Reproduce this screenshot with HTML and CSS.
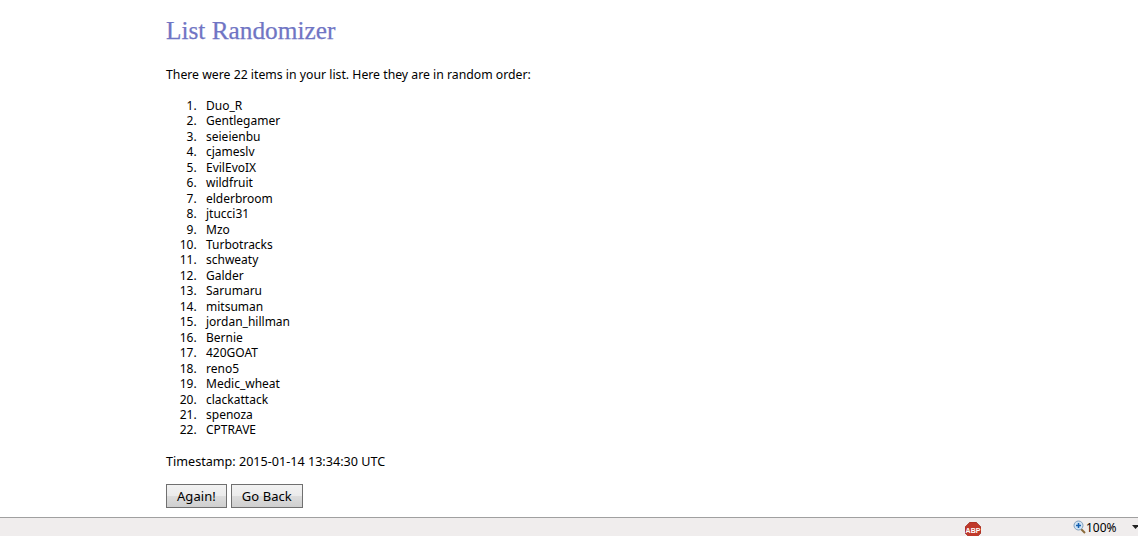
FILE: index.html
```html
<!DOCTYPE html>
<html lang="en">
<head>
<meta charset="utf-8">
<title>List Randomizer</title>
<link rel="stylesheet" href="styles.css">
</head>
<body>
<main class="page">
<h1 class="title">List Randomizer</h1>
<p class="intro">There were 22 items in your list. Here they are in random order:</p>
<ol class="items">
<li>Duo_R</li><li>Gentlegamer</li><li>seieienbu</li><li>cjameslv</li><li>EvilEvoIX</li><li>wildfruit</li><li>elderbroom</li><li>jtucci31</li><li>Mzo</li><li>Turbotracks</li><li>schweaty</li><li>Galder</li><li>Sarumaru</li><li>mitsuman</li><li>jordan_hillman</li><li>Bernie</li><li>420GOAT</li><li>reno5</li><li>Medic_wheat</li><li>clackattack</li><li>spenoza</li><li>CPTRAVE</li>
</ol>
<p class="stamp">Timestamp: 2015-01-14 13:34:30 UTC</p>
<div class="actions"><button class="btn">Again!</button><button class="btn">Go Back</button></div>
</main>
<footer class="status">
<svg class="abp" width="16" height="16" viewBox="0 0 16 16"><polygon points="5,0 11,0 16,5 16,11 11,16 5,16 0,11 0,5" fill="#c0392b" stroke="#8e2318" stroke-width="0.600"/><text x="8" y="10.500" text-anchor="middle" class="abp-text">ABP</text></svg>
<svg class="zoom-icon" width="13" height="14" viewBox="0 0 13 14"><line x1="8" y1="9" x2="12" y2="13" stroke="#8a6a3a" stroke-width="2"/><circle cx="5.500" cy="5.500" r="4.500" fill="#cfe3f5" stroke="#7f9db9"/><path d="M3 5.500h5M5.500 3v5" stroke="#1560b0" stroke-width="1.500"/></svg>
<span class="zoom-text">100%</span>
<svg class="caret" width="7" height="4" viewBox="0 0 7 4"><polygon points="0,0 7,0 3.500,4" fill="#222"/></svg>
</footer>
</body>
</html>
```
FILE: styles.css
```css
@counter-style list-gap {
  system: extends decimal;
  suffix: ".\00a0\00a0\00a0";
}
* { box-sizing: border-box; }
html, body { height: 100%; }
body {
  margin: 0;
  height: 100vh;
  overflow: hidden;
  display: flex;
  flex-direction: column;
  background: #fff;
  color: #000;
  font-family: "Noto Sans", "DejaVu Sans", sans-serif;
  font-size: 12.25px;
  line-height: 15.43px;
}
.page { flex: 1; padding: 0 0 0 166px; min-height: 0; }
.title {
  margin: 0;
  padding-top: 16px;
  height: 67px;
  font-family: "Liberation Serif", serif;
  font-weight: 400;
  font-size: 25.3px;
  line-height: 28px;
  color: #7075c4;
  -webkit-text-stroke: 0.25px #7075c4;
}
.intro { margin: 0; height: 31px; }
.items { margin: -0.05px 0 0; padding: 0 0 0 40px; font-size: 12px; line-height: 15.453px; list-style-type: list-gap; }
.stamp { margin: 16px 0 0; font-size: 12.6px; }
.actions { display: flex; gap: 4px; margin-top: 14.5px; }
.btn {
  height: 24px;
  padding: 1px 10px 0;
  border: 1px solid #707070;
  border-radius: 0;
  background: linear-gradient(#f2f2f2 0%, #ebebeb 50%, #dddddd 50%, #cfcfcf 100%);
  font: inherit;
  font-size: 13px;
  letter-spacing: 0.05px;
  color: #000;
}
.status {
  flex: none;
  height: 19px;
  border-top: 1px solid #a0a0a0;
  background: #f0eded;
  position: relative;
  display: flex;
  align-items: center;
  padding-left: 965px;
  overflow: hidden;
}
.abp { flex: none; margin-top: 5px; }
.abp-text { font: 700 7px "Liberation Sans", sans-serif; fill: #fff; }
.zoom-icon { flex: none; margin-left: 92px; }
.zoom-text { margin-left: 0; font-size: 12px; line-height: 15px; }
.caret { flex: none; margin-left: 15px; }
```
